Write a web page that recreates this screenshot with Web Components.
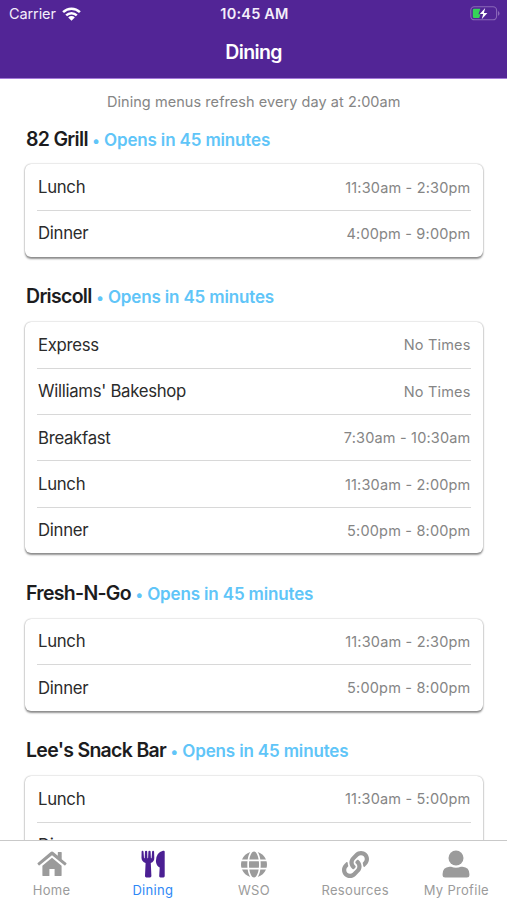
<!DOCTYPE html>
<html lang="en">
<head>
<meta charset="utf-8">
<title>Dining</title>
<style>
html, body { margin: 0; height: 100%; }
body { font-family: Inter, "Noto Sans", sans-serif; background: #fff; overflow: hidden; }
</style>
</head>
<body>
<dining-app></dining-app>
<script>
function define(name, html, extra) {
  const template = document.createElement('template');
  template.innerHTML = html;
  customElements.define(name, class extends HTMLElement {
    constructor() {
      super();
      this.attachShadow({ mode: 'open' }).append(template.content.cloneNode(true));
    }
    connectedCallback() { if (extra) extra(this, this.shadowRoot); }
  });
}

define('status-bar', `
<style>
:host { display: grid; grid-template-columns: 1fr auto 1fr; align-items: center; height: 27px; padding: 0 7px 0 9px; box-sizing: border-box; color: #f4eefb; font-size: 14.5px; }
.left { display: flex; align-items: center; gap: 6px; letter-spacing: -.1px; }
.time { font-weight: 600; font-size: 14.5px; letter-spacing: .2px; }
.battery { justify-self: end; }
svg { display: block; }
</style>
<div class="left"><span>Carrier</span>
<svg width="19" height="14" viewBox="0 0 19 14"><g fill="none" stroke="#fff" stroke-width="2.5"><path d="M1.1 5.1a12 12 0 0 1 16.8 0"/><path d="M4.2 8.3a7.6 7.6 0 0 1 10.6 0"/></g><path d="M9.5 13.8L6.2 10.4a4.7 4.7 0 0 1 6.6 0z" fill="#fff"/></svg></div>
<span class="time">10:45 AM</span>
<svg class="battery" width="30" height="15" viewBox="0 0 30 15"><rect x=".8" y=".8" width="25.8" height="13" rx="3.6" fill="none" stroke="#8b68b9" stroke-width="1.1"/><path d="M28 5v4.8q1.5-.6 1.5-2.4T28 5z" fill="#8b68b9"/><path d="M4.2 2.8h6.2L8.4 8.3h2l-1.2 3.8h-5Q2.8 12.1 2.8 10.7V4.2Q2.8 2.8 4.2 2.8z" fill="#35d358"/><path d="M15.2 2L9.8 8h3.4l-1.5 5.2L17.4 7h-3.5z" fill="#fff"/></svg>
`);

define('nav-header', `
<style>
:host { display: flex; flex-direction: column; height: 79px; box-sizing: border-box; background: #522596; border-bottom: 1px solid #a379d8; flex: none; }
h1 { margin: 0; flex: 1; display: flex; justify-content: center; align-items: center; color: #fff; font-size: 19.5px; font-weight: 600; letter-spacing: -.65px; padding-bottom: 1px; }
</style>
<status-bar></status-bar>
<h1><slot></slot></h1>
`);

define('meal-row', `
<style>
:host { display: flex; align-items: center; justify-content: space-between; height: 46.4px; box-sizing: border-box; padding: 0 0 0 1px; border-bottom: 1px solid #d8d8d8; color: #2b2b2b; font-size: 16.75px; letter-spacing: -.3px; }
:host(:last-child) { border-bottom-color: transparent; height: 45.7px; }
.time { color: #858585; font-size: 14.5px; letter-spacing: .18px; }
</style>
<span><slot></slot></span><span class="time"></span>
`, (host, root) => { root.querySelector('.time').textContent = host.getAttribute('time'); });

define('dining-hall', `
<style>
:host { display: block; }
header { display: flex; align-items: baseline; height: 49.8px; box-sizing: border-box; padding: 12.2px 0 0 1px; line-height: 24px; white-space: pre; }
h2 { margin: 0; font-size: 19.5px; font-weight: 600; color: #1c1c1e; letter-spacing: -.7px; }
.status { color: #60c5f8; font-size: 17px; font-weight: 600; letter-spacing: -.15px; margin-left: .5px; }
.dot { font-size: 15px; letter-spacing: .2px; }
.card { background: #fff; border-radius: 6px; padding: .3px 12px 0; box-shadow: 0 1.5px 2px rgba(0,0,0,.42), 0 0 1.5px rgba(0,0,0,.3); margin-bottom: 15.3px; }
</style>
<header><h2></h2><span class="status"><span class="dot"> • </span><span class="when"></span></span></header>
<div class="card"><slot></slot></div>
`, (host, root) => {
  root.querySelector('h2').textContent = host.getAttribute('name');
  root.querySelector('.when').textContent = host.getAttribute('status');
});

const ICONS = {
  home: '<svg width="30" height="26" viewBox="0 0 30 26"><path fill="currentColor" d="M15 6.7l9.6 8.1v9.4q0 .9-.9.9H17.6v-7h-5.2v7H6.3q-.9 0-.9-.9v-9.4zM15 .6q.9 0 1.6.6l4.2 3.5V1.500q0-.5.5-.5h2.900q.5 0 .5.5v6.700l4.600 3.800q.5.4.1.900l-1.100 1.300q-.4.4-.9 0L15 4.200 2.600 14.200q-.5.4-.9 0L.6 12.900q-.4-.5.1-.9L13.400 1.200Q14.100.6 15 .6z"/></svg>',
  dining: '<svg width="24" height="28" viewBox="0 0 24 28"><path fill="#4b1f93" d="M1.5.8q.9 0 1 .9l.5 6.2q.5.6.7 0L4 1.6q.1-.8 1.1-.8t1.1.8l.2 6.3q.3.6.7 0l.3-6.3q.1-.8 1.1-.8t1.1.8L9.9 7.9q.5.6.7 0l.5-6.2q.1-.9 1-.9t1 .9l.2 6.2q.1 3.7-3.5 5l.6 13.2q0 1.300-1.400 1.300H5.300q-1.400 0-1.300-1.300l.6-13.200Q.7 11.600.5 7.900L.6 1.700Q.6.8 1.500.8zM22 .8h.8q.9 0 .9.9v24.400q0 1.300-1.300 1.300h-3q-1.300 0-1.200-1.300l.5-8.600q-3.600-1.700-3.800-6.600Q15.200 2.400 22 .8z"/></svg>',
  globe: '<svg width="26" height="27" viewBox="0 0 496 512"><path fill="currentColor" d="M336.500 160C322 70.700 287.800 8 248 8s-74 62.700-88.500 152h177zM152 256c0 22.200 1.200 43.500 3.300 64h185.300c2.100-20.500 3.300-41.800 3.300-64s-1.200-43.500-3.300-64H155.300c-2.100 20.500-3.300 41.800-3.300 64zm324.700-96c-28.600-67.900-86.500-120.400-158-141.600 24.400 33.800 41.200 84.700 50 141.600h108zM177.200 18.400C105.800 39.600 47.800 92.100 19.300 160h108c8.700-56.900 25.500-107.800 49.900-141.600zM487.400 192H372.700c2.100 21 3.300 42.500 3.300 64s-1.200 43-3.300 64h114.600c5.500-20.500 8.600-41.800 8.600-64s-3.100-43.500-8.500-64zM120 256c0-21.500 1.200-43 3.300-64H8.600C3.200 212.500 0 233.800 0 256s3.200 43.500 8.600 64h114.600c-2-21-3.200-42.500-3.200-64zm39.500 96c14.500 89.300 48.700 152 88.500 152s74-62.700 88.500-152h-177zm159.300 141.600c71.400-21.200 129.400-73.700 158-141.600h-108c-8.800 56.900-25.600 107.800-50 141.600zM19.300 352c28.600 67.900 86.500 120.400 158 141.600-24.400-33.800-41.200-84.700-50-141.600h-108z"/></svg>',
  link: '<svg width="27" height="27" viewBox="0 0 512 512"><path fill="currentColor" d="M326.612 185.391c59.747 59.809 58.927 155.698.36 214.59-.11.12-.24.25-.36.37l-67.2 67.2c-59.27 59.27-155.699 59.262-214.96 0-59.27-59.26-59.27-155.7 0-214.96l37.106-37.106c9.84-9.84 26.786-3.3 27.294 10.606.648 17.722 3.826 35.527 9.69 52.721 1.986 5.822.567 12.262-3.783 16.612l-13.087 13.087c-28.026 28.026-28.905 73.66-1.155 101.96 28.024 28.579 74.086 28.749 102.325.51l67.2-67.19c28.191-28.191 28.073-73.757 0-101.83-3.701-3.694-7.429-6.564-10.341-8.569a16.037 16.037 0 0 1-6.947-12.606c-.396-10.567 3.348-21.456 11.698-29.806l21.054-21.055c5.521-5.521 14.182-6.199 20.584-1.731a152.482 152.482 0 0 1 20.522 17.197zM467.547 44.449c-59.261-59.262-155.69-59.27-214.96 0l-67.2 67.2c-.12.12-.25.25-.36.37-58.566 58.892-59.387 154.781.36 214.59a152.454 152.454 0 0 0 20.521 17.196c6.402 4.468 15.064 3.789 20.584-1.731l21.054-21.055c8.35-8.35 12.094-19.239 11.698-29.806a16.037 16.037 0 0 0-6.947-12.606c-2.912-2.005-6.64-4.875-10.341-8.569-28.073-28.073-28.191-73.639 0-101.83l67.2-67.19c28.239-28.239 74.3-28.069 102.325.51 27.75 28.3 26.872 73.934-1.155 101.96l-13.087 13.087c-4.35 4.35-5.769 10.79-3.783 16.612 5.864 17.194 9.042 34.999 9.69 52.721.509 13.906 17.454 20.446 27.294 10.606l37.106-37.106c59.271-59.259 59.271-155.699.001-214.959z"/></svg>',
  user: '<svg width="28" height="28" viewBox="0 0 28 28"><circle cx="14" cy="8" r="7.5" fill="currentColor"/><path fill="currentColor" d="M7.5 16.7h1.6q4.9 2.3 9.8 0h1.6q6.9.5 6.9 7.4v.8q0 2.5-2.5 2.5H3.1q-2.5 0-2.5-2.5v-.8q0-6.9 6.9-7.4z"/></svg>'
};

define('tab-item', `
<style>
:host { display: flex; flex-direction: column; align-items: center; color: #9b9b9b; font-size: 13px; letter-spacing: .3px; white-space: nowrap; }
:host([active]) .label { color: #2e88f6; }
.icon { height: 28px; display: flex; align-items: center; justify-content: center; margin-top: 9px; }
.label { line-height: 16px; margin-top: 4px; }
svg { display: block; }
</style>
<div class="icon"></div><span class="label"><slot></slot></span>
`, (host, root) => { root.querySelector('.icon').innerHTML = ICONS[host.getAttribute('icon')]; });

define('tab-bar', `
<style>
:host { display: grid; grid-template-columns: repeat(5, 1fr); height: 60px; box-sizing: border-box; padding-left: 1px; border-top: 1px solid #c9c9c9; background: #fff; flex: none; }
</style>
<slot></slot>
`);

define('dining-app', `
<style>
:host { display: flex; flex-direction: column; width: 507px; height: 900px; background: #fff; overflow: hidden; }
main { flex: 1; min-height: 0; overflow: hidden; padding: 0 24.5px 0 25px; }
.note { margin: 0; padding-top: 12.5px; height: 35.6px; box-sizing: border-box; text-align: center; color: #858585; font-size: 14.5px; line-height: 20px; letter-spacing: .06px; }
</style>
<nav-header>Dining</nav-header>
<main>
<p class="note">Dining menus refresh every day at 2:00am</p>
<dining-hall name="82 Grill" status="Opens in 45 minutes"><meal-row time="11:30am - 2:30pm">Lunch</meal-row><meal-row time="4:00pm - 9:00pm">Dinner</meal-row></dining-hall>
<dining-hall name="Driscoll" status="Opens in 45 minutes"><meal-row time="No Times">Express</meal-row><meal-row time="No Times">Williams' Bakeshop</meal-row><meal-row time="7:30am - 10:30am">Breakfast</meal-row><meal-row time="11:30am - 2:00pm">Lunch</meal-row><meal-row time="5:00pm - 8:00pm">Dinner</meal-row></dining-hall>
<dining-hall name="Fresh-N-Go" status="Opens in 45 minutes"><meal-row time="11:30am - 2:30pm">Lunch</meal-row><meal-row time="5:00pm - 8:00pm">Dinner</meal-row></dining-hall>
<dining-hall name="Lee's Snack Bar" status="Opens in 45 minutes"><meal-row time="11:30am - 5:00pm">Lunch</meal-row><meal-row>Dinner</meal-row></dining-hall>
</main>
<tab-bar>
<tab-item icon="home">Home</tab-item><tab-item icon="dining" active>Dining</tab-item><tab-item icon="globe">WSO</tab-item><tab-item icon="link">Resources</tab-item><tab-item icon="user">My Profile</tab-item>
</tab-bar>
`);
</script>
</body>
</html>
